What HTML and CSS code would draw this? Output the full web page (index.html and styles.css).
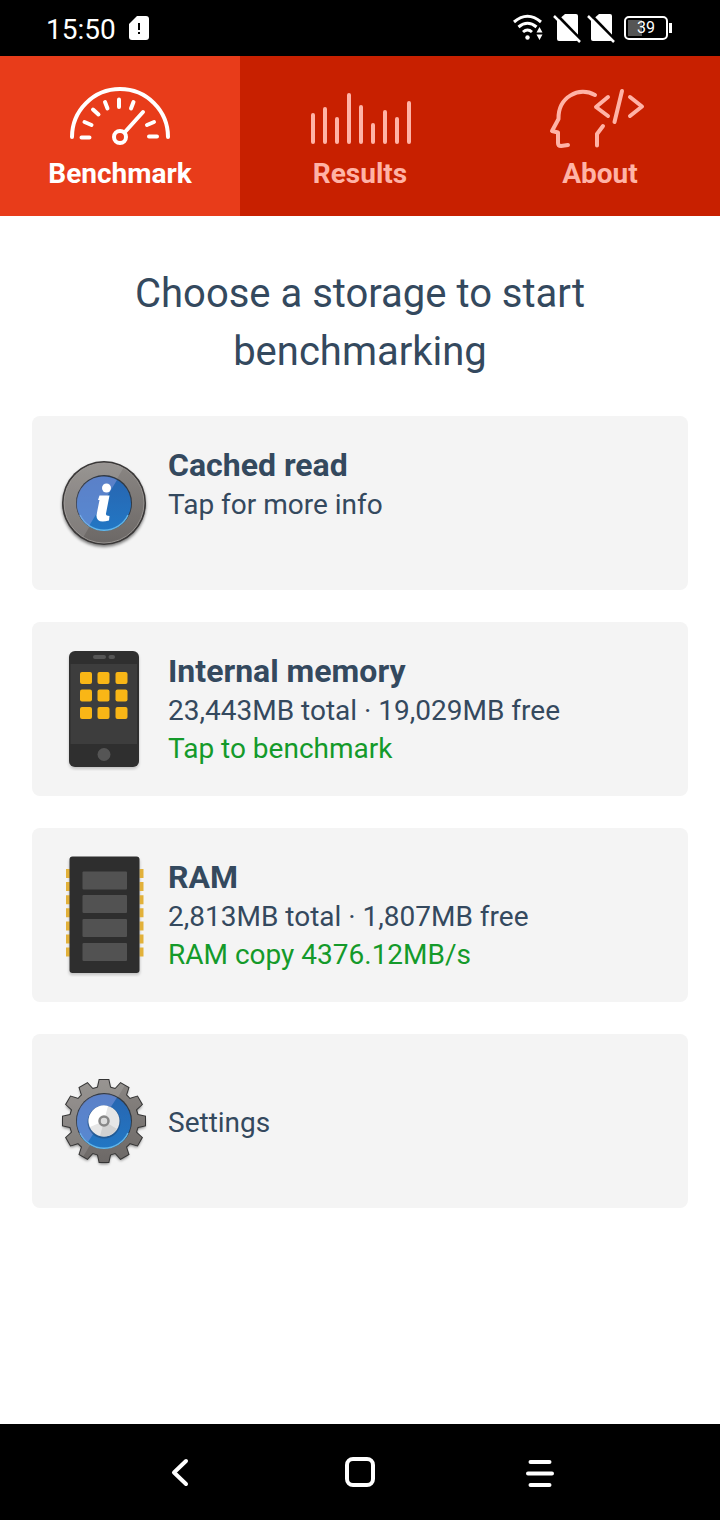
FILE: index.html
```html
<!DOCTYPE html>
<html lang="en">
<head>
<meta charset="utf-8">
<meta name="viewport" content="width=device-width, initial-scale=1">
<title>Storage benchmark</title>
<link rel="stylesheet" href="styles.css">
</head>
<body>
<div class="screen">
  <header class="status">
    <div class="status-side">
      <time class="clock">15:50</time>
      <svg width="20" height="26" viewBox="0 0 20 26" aria-hidden="true"><path fill="#fff" d="M8 1h9a3 3 0 0 1 3 3v18a3 3 0 0 1-3 3H3a3 3 0 0 1-3-3V9z"/><path stroke="#000" stroke-width="2" d="M10 8v7M10 17v2"/></svg>
    </div>
    <div class="status-side status-right">
      <svg class="wifi" width="30" height="28" viewBox="0 0 30 28" aria-hidden="true"><g fill="none" stroke="#fff" stroke-width="3"><path d="M1 8Q14.500-3.500 28 8"/><path d="M5.500 13Q14.500 5.500 23.500 13"/><path d="M10 18Q14.500 14 19 18"/></g><circle cx="14.500" cy="23.500" r="2.200" fill="#fff"/><path fill="#fff" d="M26.500 13l3 5.500h-6zM26.500 26l3-5.500h-6z"/></svg>
      <svg width="28" height="30" viewBox="0 0 28 30" aria-hidden="true"><path fill="#fff" d="M12 1h11a2 2 0 0 1 2 2v23a2 2 0 0 1-2 2H6a2 2 0 0 1-2-2V8z"/><path stroke="#000" stroke-width="3" d="M3 1L28 27"/><path stroke="#fff" stroke-width="2.500" d="M1 3L27 29"/></svg>
      <svg width="28" height="30" viewBox="0 0 28 30" aria-hidden="true"><path fill="#fff" d="M12 1h11a2 2 0 0 1 2 2v23a2 2 0 0 1-2 2H6a2 2 0 0 1-2-2V8z"/><path stroke="#000" stroke-width="3" d="M3 1L28 27"/><path stroke="#fff" stroke-width="2.500" d="M1 3L27 29"/></svg>
      <span class="battery">39</span>
    </div>
  </header>

  <nav class="tabs">
    <button class="tab tab-active" type="button">
      <svg width="104" height="64" viewBox="68 84 104 64" fill="none" stroke="currentColor" stroke-width="4" stroke-linecap="round" aria-hidden="true"><path d="M72 137A48 48 0 0 1 168 137"/><circle cx="120" cy="137" r="6"/><path d="M124.500 132.500L143 112M81.500 137.500h8M84.500 122l7 3M93 109.500l5.500 5M105 102l2.500 6.500M119 99.500v7.500M133.500 102l-2.500 6.500M154 122l-7 3M149 136.500h8"/></svg>
      <span>Benchmark</span>
    </button>
    <button class="tab" type="button">
      <svg width="104" height="64" viewBox="308 84 104 64" fill="none" stroke="currentColor" stroke-width="4" stroke-linecap="round" aria-hidden="true"><path d="M313 115v27M325 109v33M337 119v23M349 95v47M361 107v35M373 125v17M385 112v30M397 119v23M409 103v39"/></svg>
      <span>Results</span>
    </button>
    <button class="tab" type="button">
      <svg width="104" height="64" viewBox="548 84 104 64" fill="none" stroke="currentColor" stroke-width="4" stroke-linecap="round" stroke-linejoin="round" aria-hidden="true"><path d="M595 95C579 86 558 97 558.500 119L552 131L558 132.500V143Q558 146 561 146L568 145M603 126L597 134V145.500M608 97L596 107L608 116M622 91L614.500 122M630 97L642 106.500L630 116"/></svg>
      <span>About</span>
    </button>
  </nav>

  <main class="content">
    <h1 class="heading">Choose a storage to start benchmarking</h1>
    <div class="cards">
      <button class="card" type="button">
        <svg class="card-icon" width="96" height="124" viewBox="56 441 96 124" aria-hidden="true">
          <defs>
            <linearGradient id="metal" x1="0" y1="0" x2="0" y2="1"><stop offset="0" stop-color="#8a8683"/><stop offset="1" stop-color="#6c6866"/></linearGradient>
            <linearGradient id="blue" x1="0" y1="0" x2="0" y2="1"><stop offset="0" stop-color="#2865b0"/><stop offset="1" stop-color="#2277c4"/></linearGradient>
            <clipPath id="ring"><circle cx="104" cy="503" r="40"/></clipPath>
            <filter id="soft" x="-20%" y="-20%" width="140%" height="140%"><feGaussianBlur stdDeviation="1.500"/></filter>
          </defs>
          <circle cx="104" cy="505" r="42" fill="#000" opacity=".5" filter="url(#soft)"/>
          <circle cx="104" cy="503" r="42" fill="#3a3838"/>
          <circle cx="104" cy="503" r="40" fill="url(#metal)" stroke="#979390"/>
          <g clip-path="url(#ring)"><path d="M60 460H128L80 543H60z" fill="#fff" opacity=".12"/></g>
          <circle cx="104" cy="503" r="28" fill="#303944"/>
          <circle cx="104" cy="503.500" r="27" fill="url(#blue)"/>
          <path d="M80 515A26.500 26.500 0 0 0 128 515" fill="none" stroke="#62b5e8" stroke-width="1.500"/>
          <path d="M78 512A27 27 0 0 1 117 480L89 526Q80 519 78 512z" fill="#8d9be0" opacity=".5"/>
          <circle cx="106.500" cy="488" r="4.500" fill="#fff"/>
          <path d="M99.500 495.500H109.500L106 513.500Q105.500 516 109.500 516L109 520.500Q96 524 96.500 515L99.500 500H98z" fill="#fff"/>
        </svg>
        <span class="card-text"><strong class="card-title">Cached read</strong><span>Tap for more info</span></span>
      </button>

      <button class="card" type="button">
        <svg class="card-icon" width="96" height="124" viewBox="56 647 96 124" aria-hidden="true">
          <rect x="69" y="653" width="70" height="116" rx="6" fill="#000" opacity=".2" filter="url(#soft)"/>
          <rect x="69" y="651" width="70" height="116" rx="6" fill="#2f2f2f"/>
          <path fill="#3d3d3d" d="M70.500 664H137V744H70.500z"/>
          <rect x="93" y="655" width="13" height="4" rx="2" fill="#555"/><rect x="108.500" y="655" width="6.500" height="4" rx="2" fill="#555"/>
          <g fill="#f9b616"><rect x="80" y="672" width="12" height="12" rx="2"/><rect x="97.500" y="672" width="12" height="12" rx="2"/><rect x="115.500" y="672" width="12" height="12" rx="2"/><rect x="80" y="689.500" width="12" height="12" rx="2"/><rect x="97.500" y="689.500" width="12" height="12" rx="2"/><rect x="115.500" y="689.500" width="12" height="12" rx="2"/><rect x="80" y="707" width="12" height="12" rx="2"/><rect x="97.500" y="707" width="12" height="12" rx="2"/><rect x="115.500" y="707" width="12" height="12" rx="2"/></g>
          <circle cx="104" cy="754.500" r="6.500" fill="#555"/>
        </svg>
        <span class="card-text"><strong class="card-title">Internal memory</strong><span>23,443MB total · 19,029MB free</span><span class="result">Tap to benchmark</span></span>
      </button>

      <button class="card" type="button">
        <svg class="card-icon" width="96" height="124" viewBox="56 853 96 124" aria-hidden="true">
          <rect x="69" y="859" width="71" height="116" rx="3" fill="#000" opacity=".2" filter="url(#soft)"/>
          <path d="M68 869V957M141.500 869V957" stroke="#e2b13a" stroke-width="4" stroke-dasharray="9 4.100"/>
          <rect x="69.500" y="856.500" width="70" height="116.500" rx="3" fill="#2e2e2e"/>
          <g fill="#525252"><rect x="82.500" y="871.500" width="44.500" height="18" rx="1"/><rect x="82.500" y="895" width="44.500" height="18" rx="1"/><rect x="82.500" y="919" width="44.500" height="18" rx="1"/><rect x="82.500" y="943" width="44.500" height="18" rx="1"/></g>
        </svg>
        <span class="card-text"><strong class="card-title">RAM</strong><span>2,813MB total · 1,807MB free</span><span class="result">RAM copy 4376.12MB/s</span></span>
      </button>

      <button class="card card-single" type="button">
        <svg class="card-icon" width="96" height="124" viewBox="-48 -62 96 124" aria-hidden="true">
          <defs>
            <linearGradient id="steel" gradientUnits="userSpaceOnUse" x1="0" y1="-42" x2="0" y2="42"><stop offset="0" stop-color="#8a8683"/><stop offset="1" stop-color="#6c6866"/></linearGradient>
            <path id="tooth" d="M-8-30L-6-34L-4.500-41H4.500L6-34L8-30z"/>
            <g id="gear"><circle r="34"/><use href="#tooth"/><use href="#tooth" transform="rotate(30)"/><use href="#tooth" transform="rotate(60)"/><use href="#tooth" transform="rotate(90)"/><use href="#tooth" transform="rotate(120)"/><use href="#tooth" transform="rotate(150)"/><use href="#tooth" transform="rotate(180)"/><use href="#tooth" transform="rotate(210)"/><use href="#tooth" transform="rotate(240)"/><use href="#tooth" transform="rotate(270)"/><use href="#tooth" transform="rotate(300)"/><use href="#tooth" transform="rotate(330)"/></g>
            <mask id="gearfill" maskUnits="userSpaceOnUse" x="-48" y="-48" width="96" height="96"><use href="#gear" fill="#fff"/></mask>
          </defs>
          <use href="#gear" y="2" fill="#000" opacity=".5" filter="url(#soft)"/>
          <use href="#gear" fill="#343434" stroke="#343434" stroke-width="2"/>
          <g mask="url(#gearfill)"><path fill="url(#steel)" d="M-48-48H48V48H-48z"/><path fill="#fff" opacity=".12" d="M-48-48H28L-28 48H-48z"/></g>
          <circle r="28" fill="#303944"/>
          <circle cy=".5" r="27" fill="url(#blue)"/>
          <path d="M-24 12A26.500 26.500 0 0 0 24 12" fill="none" stroke="#62b5e8" stroke-width="1.500"/>
          <path d="M-26 8A27 27 0 0 1 13-23.500L-16 21Q-24 15-26 8z" fill="#8d9be0" opacity=".5"/>
          <circle cy="1" r="16.500" fill="#225082" opacity=".7"/>
          <circle r="15.500" fill="#e6e6e6"/>
          <path d="M0 0L4-15A15.500 15.500 0 0 0-14 6z" fill="#fff"/><path d="M0 0L13 8A15.500 15.500 0 0 1-4 15z" fill="#d2d2d2"/>
          <circle r="4.500" fill="#ddd" stroke="#888" stroke-width="2.500"/>
        </svg>
        <span class="card-text">Settings</span>
      </button>
    </div>
  </main>

  <footer class="navbar">
    <button class="nav-key" type="button" aria-label="Back"><svg width="32" height="32" viewBox="0 0 32 32" fill="none" stroke="#fff" stroke-width="4" stroke-linecap="round" stroke-linejoin="round"><path d="M22 5L10 16.500L22 28"/></svg></button>
    <button class="nav-key" type="button" aria-label="Home"><svg width="32" height="32" viewBox="0 0 32 32" fill="none" stroke="#fff" stroke-width="4"><rect x="3" y="3" width="26" height="26" rx="6"/></svg></button>
    <button class="nav-key" type="button" aria-label="Recent apps"><svg width="32" height="32" viewBox="0 0 32 32" fill="none" stroke="#fff" stroke-width="4" stroke-linecap="round"><path d="M6.500 6H25.500M4 17.500H28M6.500 29H25.500"/></svg></button>
  </footer>
</div>
</body>
</html>
```
FILE: styles.css
```css
* { box-sizing: border-box; }

body {
  margin: 0;
  background: #fff;
  color: #34495e;
  font-family: Roboto, "Liberation Sans", sans-serif;
  font-size: 28px;
  line-height: 38px;
}

svg { display: block; flex: none; }

button {
  margin: 0;
  border: 0;
  font: inherit;
  color: inherit;
  cursor: pointer;
}

.screen {
  display: flex;
  flex-direction: column;
  min-height: 100vh;
}

.status {
  display: flex;
  align-items: center;
  justify-content: space-between;
  height: 56px;
  padding: 0 48px 0 46px;
  background: #000;
  color: #fff;
}

.status-side {
  display: flex;
  align-items: center;
  gap: 13px;
}

.status-right { gap: 6px; }

.wifi { margin-right: 4px; }

.clock { padding-top: 4px; }

.battery {
  position: relative;
  display: grid;
  place-items: center;
  width: 44px;
  height: 24px;
  margin-left: 3px;
  margin-right: 4px;
  border: 2px solid #fff;
  border-radius: 5px;
  background: linear-gradient(90deg, #555 14px, transparent 14px) 2px 2px / 36px 16px no-repeat;
  font-size: 16px;
  line-height: 20px;
}

.battery::after {
  content: "";
  position: absolute;
  top: 5px;
  right: -6px;
  width: 3px;
  height: 10px;
  background: #fff;
}

.tabs {
  display: grid;
  grid-template-columns: repeat(3, 1fr);
  background: #c82000;
}

.tab {
  display: flex;
  flex-direction: column;
  align-items: center;
  gap: 7px;
  padding: 28px 0 23px;
  background: transparent;
  color: #ffb3a6;
  font-weight: 700;
}

.tab-active {
  background: #e83c1a;
  color: #fff;
}

.content {
  flex: 1;
  padding: 49px 32px 32px;
}

.heading {
  max-width: 560px;
  margin: 0 auto 35px;
  font-size: 40px;
  font-weight: 400;
  line-height: 58px;
  text-align: center;
}

.cards {
  display: grid;
  gap: 32px;
}

.card {
  display: flex;
  align-items: flex-start;
  gap: 16px;
  padding: 25px 24px;
  border-radius: 8px;
  background: #f4f4f4;
  text-align: left;
}

.card-single { align-items: center; }

.card-text {
  display: flex;
  flex-direction: column;
  padding-top: 3px;
}

.card-title {
  font-size: 32px;
  line-height: 42px;
}

.result { color: #149a2a; }

.navbar {
  display: flex;
  justify-content: center;
  gap: 84px;
  height: 96px;
  background: #000;
}

.nav-key {
  display: grid;
  place-items: center;
  width: 96px;
  padding: 0;
  background: transparent;
}
```
